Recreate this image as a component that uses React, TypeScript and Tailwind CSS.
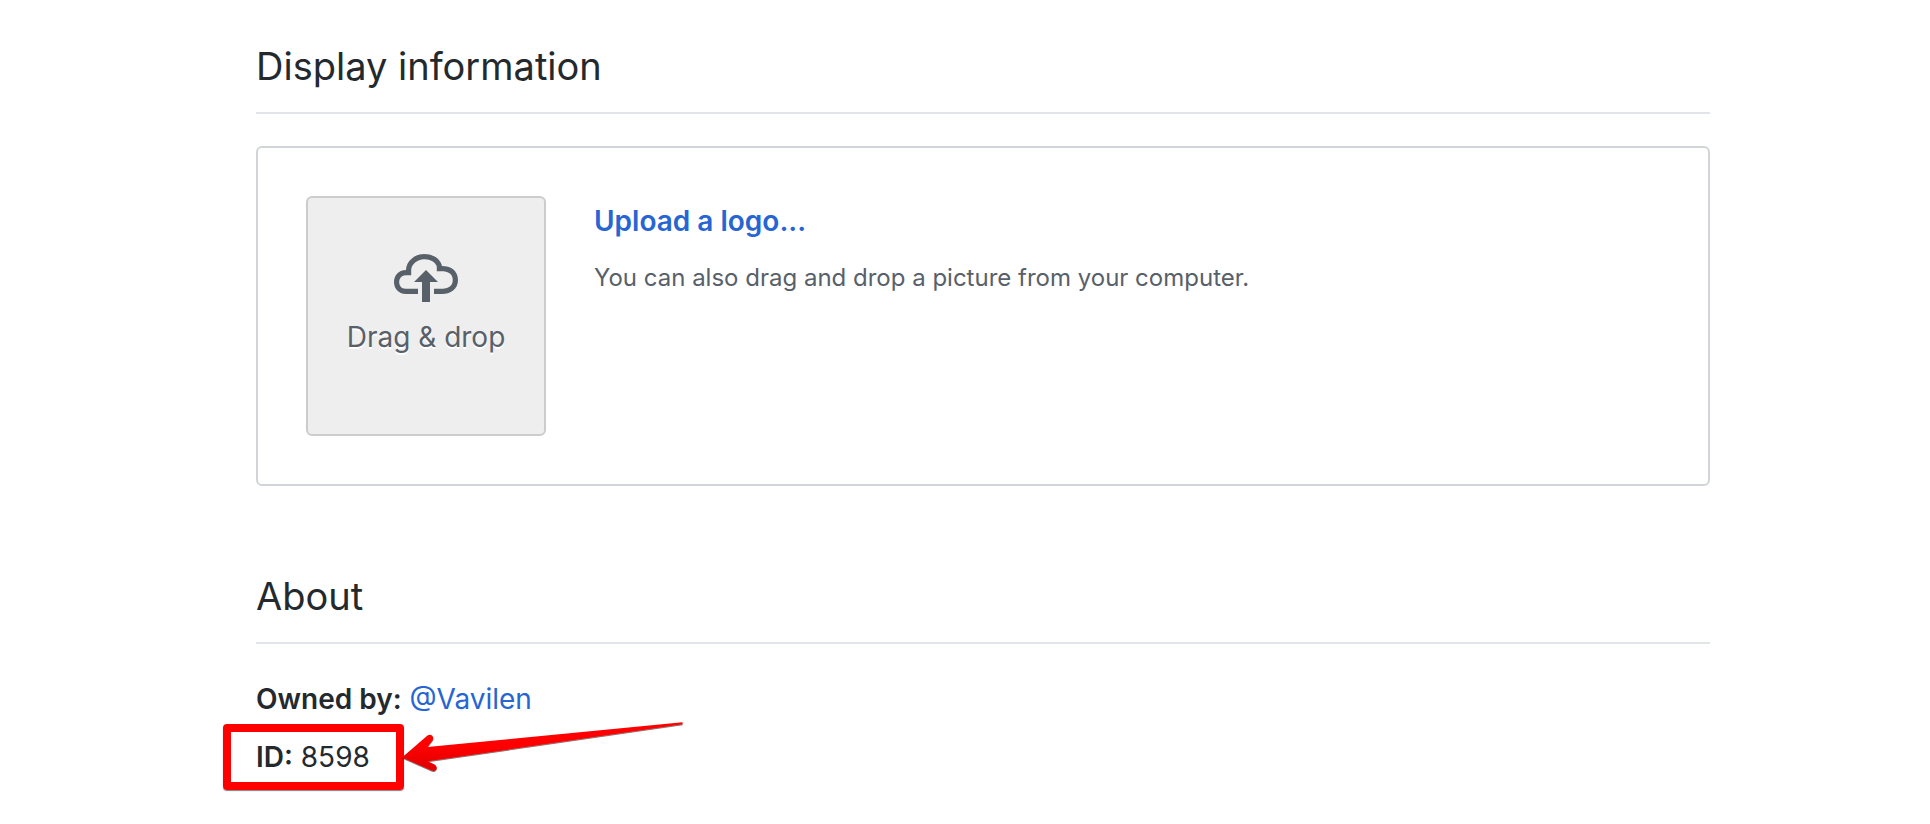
import type { ReactNode } from "react";

function CloudUploadIcon() {
  return (
    <svg viewBox="0 0 16 16" className="size-16 fill-current" aria-hidden="true">
      <path
        fillRule="evenodd"
        d="M7 9H5l3-3 3 3H9v5H7V9zm5-4c0-.44-.91-3-4.5-3C5.08 2 3 3.92 3 6 1.02 6 0 7.52 0 9c0 1.53 1 3 3 3h3v-1.3H3c-1.62 0-1.7-1.42-1.7-1.7 0-.17.05-1.7 1.7-1.7h1.3V6c0-1.39 1.56-2.7 3.2-2.7 2.55 0 3.13 1.55 3.2 1.8v1.2H12c.81 0 2.7.22 2.7 2.2 0 2.09-2.25 2.2-2.7 2.2h-2V12h2c2.08 0 4-1.16 4-3.5C16 6.06 14.08 5 12 5z"
      />
    </svg>
  );
}

function PointerArrow() {
  return (
    <svg
      viewBox="0 0 288 60"
      className="absolute top-1/2 left-full ml-1 h-[60px] w-[288px] -translate-y-10"
      aria-hidden="true"
    >
      <defs>
        <linearGradient id="arrow-fill" x1="0" y1="0" x2="0.05" y2="1">
          <stop offset="0.5" stopColor="#ff0000" />
          <stop offset="0.85" stopColor="#e60000" />
        </linearGradient>
        <filter id="arrow-shadow" x="-5%" y="-10%" width="110%" height="130%">
          <feDropShadow dx="0" dy="1" stdDeviation="0.5" floodOpacity="0.55" />
        </filter>
      </defs>
      <path
        filter="url(#arrow-shadow)"
        fill="url(#arrow-fill)"
        d="M2 40.500 L27.500 18.500 C31 16 35 20 32.500 23.500 L27.500 30 L282.500 5.300 L282.500 7.300 L28 44.200 L34.500 47.500 C39 50.500 36 55.500 31.500 53.500 Z"
      />
    </svg>
  );
}

function Section({ title, children }: { title: string; children: ReactNode }) {
  return (
    <section>
      <h2 className="mb-8 border-b-2 border-[#e1e4e8] pb-4 text-[38px] leading-[60px]">{title}</h2>
      {children}
    </section>
  );
}

export default function App() {
  return (
    <main
      className="flex flex-col gap-20 bg-white pt-9 pr-[220px] pb-8 pl-64 text-[28px] leading-[42px] text-[#24292e]"
      style={{ fontFamily: 'Inter, "Liberation Sans", sans-serif' }}
    >
      <Section title="Display information">
        <div className="flex gap-12 rounded-md border-2 border-[#d1d5da] p-12">
          <button
            type="button"
            className="flex size-60 shrink-0 flex-col items-center rounded-md border-2 border-[#cccccc] bg-[#eeeeee] pt-12 text-[#586069] [text-shadow:0_2px_0_#fff]"
          >
            <CloudUploadIcon />
            <span className="mt-1.5">Drag &amp; drop</span>
          </button>
          <div className="pt-1">
            <a href="#upload" className="block w-fit font-semibold text-[#2765d3]">
              Upload a logo...
            </a>
            <p className="mt-[18px] text-2xl leading-9 text-[#586069]">
              You can also drag and drop a picture from your computer.
            </p>
          </div>
        </div>
      </Section>

      <Section title="About">
        <div className="flex flex-col gap-4 pt-0.5">
          <p>
            <strong className="font-semibold">Owned by:</strong>{" "}
            <a href="#vavilen" className="text-[#2765d3]">
              @Vavilen
            </a>
          </p>
          <p className="relative w-fit">
            <strong className="font-semibold">ID:</strong> 8598
            <span className="absolute -top-3 -right-[34px] -bottom-3 -left-[33px] rounded-sm border-8 border-[#ff0000] shadow-[0_1px_1px_rgba(0,0,0,0.5)]">
              <PointerArrow />
            </span>
          </p>
        </div>
      </Section>
    </main>
  );
}
